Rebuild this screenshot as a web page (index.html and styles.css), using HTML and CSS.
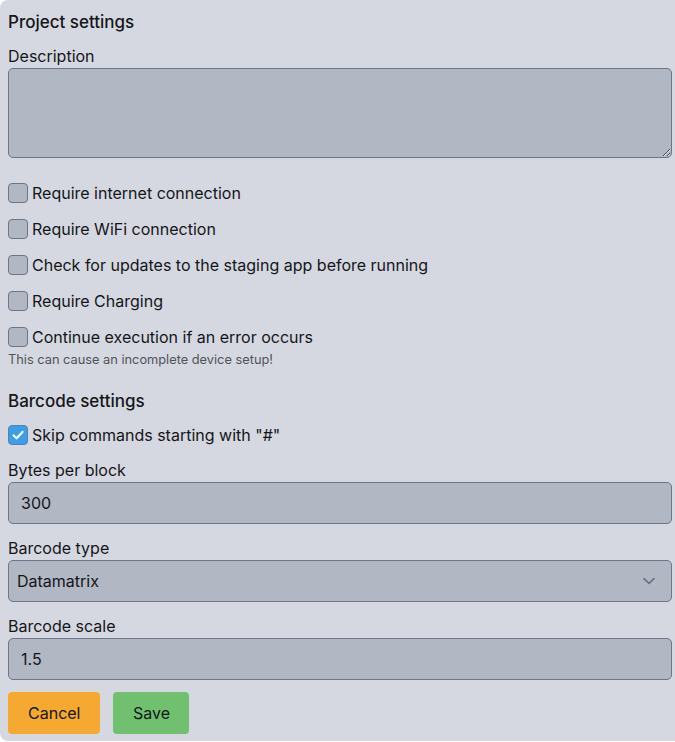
FILE: index.html
```html
<!DOCTYPE html>
<html>
<head>
<meta charset="utf-8">
<link rel="stylesheet" href="styles.css">
</head>
<body>
<div class="panel">
  <h2 class="heading">Project settings</h2>
  <label class="label">Description</label>
  <textarea class="textarea"></textarea>

  <div class="checks">
    <label class="check"><span class="box"></span><span>Require internet connection</span></label>
    <label class="check"><span class="box"></span><span>Require WiFi connection</span></label>
    <label class="check"><span class="box"></span><span>Check for updates to the staging app before running</span></label>
    <label class="check"><span class="box"></span><span>Require Charging</span></label>
    <label class="check"><span class="box"></span><span>Continue execution if an error occurs</span></label>
  </div>
  <p class="hint">This can cause an incomplete device setup!</p>

  <h2 class="heading heading-2">Barcode settings</h2>
  <label class="check check-single"><span class="box box-on"><svg width="14" height="14" viewBox="0 0 14 14"><path d="M2.5 7.4 L5.6 10.3 L11.5 3.9" fill="none" stroke="#fff" stroke-width="2.2" stroke-linecap="round" stroke-linejoin="round"/></svg></span><span>Skip commands starting with "#"</span></label>

  <div class="field">
    <label class="label">Bytes per block</label>
    <div class="input">300</div>
  </div>
  <div class="field">
    <label class="label">Barcode type</label>
    <div class="input select">
      <span>Datamatrix</span>
      <svg class="chev" width="14" height="14" viewBox="0 0 14 14"><path d="M2 4.6 L7 9.4 L12 4.6" fill="none" stroke="#6b7286" stroke-width="1.7" stroke-linecap="round" stroke-linejoin="round"/></svg>
    </div>
  </div>
  <div class="field">
    <label class="label">Barcode scale</label>
    <div class="input">1.5</div>
  </div>

  <div class="actions">
    <button class="btn btn-cancel">Cancel</button>
    <button class="btn btn-save">Save</button>
  </div>
</div>
</body>
</html>
```
FILE: styles.css
```css
* { box-sizing: border-box; }
html, body { margin: 0; padding: 0; background: #ffffff; }
body {
  font-family: Inter, "Noto Sans", sans-serif;
  font-size: 16px;
  color: #141619;
  overflow: hidden;
}
.panel {
  width: 675px;
  height: 741px;
  background: #d5d8e0;
  border-radius: 8px 0 0 8px;
  padding: 10px 3px 7px 8px;
  display: flex;
  flex-direction: column;
}
.heading {
  margin: 0;
  font-size: 17px;
  font-weight: 500;
  line-height: 24px;
}
.heading-2 { margin-top: 21px; }
.label {
  display: block;
  line-height: 24px;
}
.panel > .label { margin-top: 10px; }
.textarea {
  display: block;
  width: 664px;
  height: 90px;
  background: #b2b7c4;
  border: 1px solid #6d758a;
  border-radius: 5px;
  font: inherit;
  margin: 0;
  padding: 8px 12px;
}
.checks {
  margin-top: 23px;
  display: flex;
  flex-direction: column;
  gap: 12px;
}
.check {
  display: flex;
  align-items: center;
  gap: 4px;
  line-height: 24px;
}
.check-single { margin-top: 10px; }
.box {
  width: 20px;
  height: 20px;
  border: 1px solid #6d758a;
  background: #b2b7c4;
  border-radius: 4px;
  display: flex;
  align-items: center;
  justify-content: center;
  flex: none;
}
.box-on {
  background: #3c9de8;
  border-color: #5a7fa8;
}
.hint {
  margin: 3px 0 0;
  font-size: 12.8px;
  line-height: 16px;
  color: #4f5359;
}
.field { margin-top: 11px; }
.field + .field { margin-top: 12px; }
.input {
  width: 664px;
  height: 42px;
  background: #b2b7c4;
  border: 1px solid #6d758a;
  border-radius: 5px;
  padding: 0 12px;
  display: flex;
  align-items: center;
  line-height: 24px;
}
.select {
  padding: 0 15px 0 8px;
  justify-content: space-between;
}
.chev { flex: none; }
.actions {
  margin-top: 12px;
  display: flex;
  gap: 13px;
}
.btn {
  height: 42px;
  border: none;
  border-radius: 4px;
  font: inherit;
  color: #141619;
  padding: 0 20px;
}
.btn-cancel { background: #f5a930; width: 92px; }
.btn-save { background: #70c070; width: 76px; }
```
